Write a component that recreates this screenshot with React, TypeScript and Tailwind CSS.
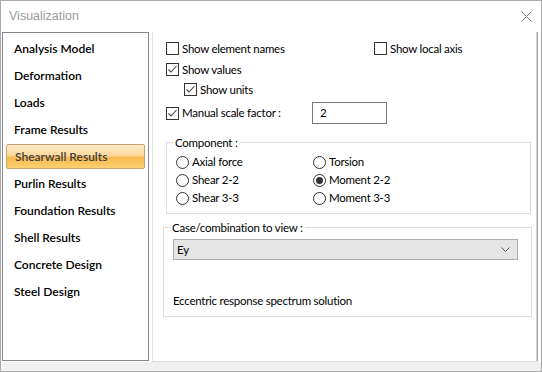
import React from 'react';

const items = [
  'Analysis Model',
  'Deformation',
  'Loads',
  'Frame Results',
  'Shearwall Results',
  'Purlin Results',
  'Foundation Results',
  'Shell Results',
  'Concrete Design',
  'Steel Design',
];

const Check: React.FC<{ checked?: boolean; label: string }> = ({ checked, label }) => (
  <div className="flex items-center h-[13px]">
    <div className="w-[13px] h-[13px] border border-[#333] bg-white flex items-center justify-center shrink-0">
      {checked && (
        <svg width="11" height="11" viewBox="0 0 11 11">
          <polyline points="1.5,5.5 4,8 9.5,2" fill="none" stroke="#444" strokeWidth="1.1" />
        </svg>
      )}
    </div>
    <span className="ml-[3px] whitespace-nowrap">{label}</span>
  </div>
);

const Radio: React.FC<{ checked?: boolean; label: string }> = ({ checked, label }) => (
  <div className="flex items-center h-[18px]">
    <div className="w-[13px] h-[13px] rounded-full border border-[#333] bg-white flex items-center justify-center shrink-0">
      {checked && <div className="w-[7px] h-[7px] rounded-full bg-[#333]" />}
    </div>
    <span className="ml-[3px] whitespace-nowrap">{label}</span>
  </div>
);

export default function App() {
  return (
    <div className="w-[542px] h-[372px] border border-[#a9a9a9] bg-white flex flex-col text-[12px] text-black font-['Lato','Liberation_Sans',sans-serif] overflow-hidden">
      {/* title bar */}
      <div className="h-[31px] flex items-center justify-between pl-[8px] pr-[9px] shrink-0">
        <span className="text-[#9a9a9a] text-[12.5px] font-['Liberation_Sans',sans-serif]">Visualization</span>
        <svg width="11" height="11" viewBox="0 0 11 11">
          <path d="M0.5 0.5 L10.5 10.5 M10.5 0.5 L0.5 10.5" stroke="#777" strokeWidth="1" />
        </svg>
      </div>

      <div className="flex flex-1 min-h-0">
        {/* left list */}
        <div className="ml-[1px] w-[147px] h-[329px] border border-[#828790] pt-[2px] shrink-0">
          {items.map((it) => {
            const sel = it === 'Shearwall Results';
            return (
              <div key={it} className="h-[27px] flex items-center mx-[3px] font-semibold">
                {sel ? (
                  <div className="w-[139px] h-[25px] flex items-center pl-[8px] border border-[#c4a56d] rounded-[2px] text-[#3d3d3d] bg-[linear-gradient(to_bottom,#fdebc8_0%,#fbd89c_45%,#f8b950_55%,#fbd070_100%)]">
                    {it}
                  </div>
                ) : (
                  <span className="pl-[8px]">{it}</span>
                )}
              </div>
            );
          })}
        </div>

        {/* right panel */}
        <div className="ml-[3px] w-[386px] h-[330px] border-l border-[#e3e3e3] border-b border-b-[#dcdcdc] flex shrink-0 text-[11.5px] tracking-[-0.25px]">
          <div className="flex-1 flex flex-col pt-[10px]">
            <div className="flex pl-[13px]">
              <div className="w-[208px]">
                <Check label="Show element names" />
              </div>
              <Check label="Show local axis" />
            </div>
            <div className="pl-[13px] mt-[8px]">
              <Check checked label="Show values" />
            </div>
            <div className="pl-[31px] mt-[7px]">
              <Check checked label="Show units" />
            </div>
            <div className="pl-[13px] mt-[6px] h-[22px] flex items-center">
              <div className="w-[146px]">
                <Check checked label="Manual scale factor :" />
              </div>
              <div className="w-[75px] h-[22px] border border-[#7a7a7a] flex items-center pl-[7px]">2</div>
            </div>

            {/* Component group */}
            <div className="relative ml-[13px] mt-[18px] w-[365px] h-[72px] border border-[#dcdcdc] pl-[9px] pt-[10px]">
              <span className="absolute -top-[9px] left-[6px] bg-white px-[2px]">Component :</span>
              <div className="grid grid-cols-[137px_1fr]">
                <Radio label="Axial force" />
                <Radio label="Torsion" />
                <Radio label="Shear 2-2" />
                <Radio checked label="Moment 2-2" />
                <Radio label="Shear 3-3" />
                <Radio label="Moment 3-3" />
              </div>
            </div>

            {/* Case group */}
            <div className="relative ml-[10px] mt-[13px] w-[369px] h-[90px] border border-[#dcdcdc] pl-[9px] pt-[11px]">
              <span className="absolute -top-[9px] left-[6px] bg-white px-[2px]">Case/combination to view :</span>
              <div className="w-[345px] h-[21px] bg-[#e5e5e5] border border-[#adadad] flex items-center justify-between pl-[3px] pr-[7px]">
                <span>Ey</span>
                <svg width="9" height="5" viewBox="0 0 9 5">
                  <polyline points="0.5,0.5 4.5,4.5 8.5,0.5" fill="none" stroke="#555" strokeWidth="1" />
                </svg>
              </div>
              <div className="mt-[32px]">Eccentric response spectrum solution</div>
            </div>
          </div>
          <div className="w-[1px] bg-[#dadada]" />
          <div className="w-[1px] bg-[#a0a0a0]" />
        </div>
      </div>
      <div className="h-[9px] bg-[#f0f0f0] shrink-0" />
    </div>
  );
}
